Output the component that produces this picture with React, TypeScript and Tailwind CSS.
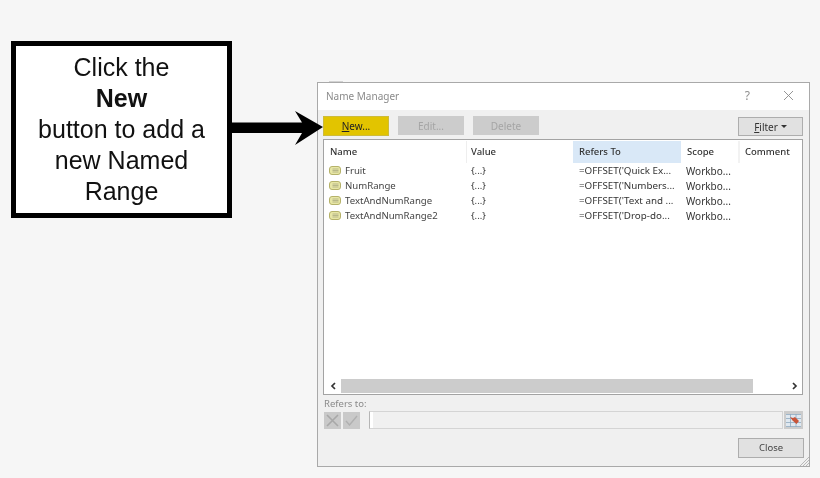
import React from "react";

const rows = [
  { name: "Fruit", refers: "=OFFSET('Quick Ex..." },
  { name: "NumRange", refers: "=OFFSET('Numbers..." },
  { name: "TextAndNumRange", refers: "=OFFSET('Text and ..." },
  { name: "TextAndNumRange2", refers: "=OFFSET('Drop-do..." },
];

const NameIcon = () => (
  <svg width="12" height="9" viewBox="0 0 12 9" className="shrink-0">
    <rect x="0.5" y="0.5" width="11" height="8" rx="2.500" fill="#e8e7a6" stroke="#b5b26a" />
    <path d="M3.500 3h6M3.500 4.500h6M3.500 6h6" stroke="#a3a37c" strokeWidth="0.7" />
  </svg>
);

const PickerIcon = () => (
  <svg width="15" height="13" viewBox="0 0 15 13">
    <rect width="15" height="13" fill="#dfe8f0" />
    <path d="M0 .5h15M0 4.500h15M0 8.500h15M0 12.500h15M4.500 0v13M10 0v13" stroke="#8ea8bf" strokeWidth="0.8" />
    <path d="M4 3l3 1 2-1 4 4-2.500 3-4-3.500z" fill="#c8553a" />
  </svg>
);

const App: React.FC = () => {
  return (
    <div className="w-[820px] h-[478px] bg-[#f6f6f6] overflow-hidden flex items-start relative font-['Noto_Sans',sans-serif]">
      {/* callout */}
      <div className="mt-[41px] ml-[11px] w-[221px] h-[177px] border-[5px] border-black bg-white flex flex-col items-center justify-center text-[25px] leading-[31px] text-[#111] font-['Liberation_Sans',sans-serif] blur-[0.3px]">
        <div>Click the</div>
        <div className="font-bold">New</div>
        <div>button to add a</div>
        <div>new Named</div>
        <div>Range</div>
      </div>

      {/* dialog */}
      <div className="mt-[82px] ml-[85px] w-[493px] h-[385px] border border-[#a9a9a9] bg-[#f0f0f0] flex flex-col relative text-[9.500px] leading-[14px] text-[#333] blur-[0.35px]">
        <div className="absolute -top-[2px] left-[11px] w-[14px] h-px bg-[#d2d2d2]" />

        <div className="h-[27px] bg-white flex items-center pl-[8px] pr-[15px] shrink-0">
          <span className="text-[#8a8a8a] text-[10px] -mt-[2px]">Name Manager</span>
          <span className="ml-auto text-[#8f8f8f] text-[12px] -mt-[2px]">?</span>
          <svg width="11" height="11" viewBox="0 0 11 11" className="ml-[33px] -mt-[2px]">
            <path d="M1 1l9 9M10 1l-9 9" stroke="#8a8a8a" strokeWidth="0.9" />
          </svg>
        </div>

        <div className="flex pl-[5px] pr-[6px] pt-[6px] h-[29px] shrink-0 items-start">
          <div className="w-[66px] h-[20px] bg-[#e2c400] border border-[#cdbb3a] flex items-center justify-center text-[#222] text-[10px]">
            <span><u>N</u>ew...</span>
          </div>
          <div className="ml-[9px] w-[66px] h-[19px] bg-[#cccccc] flex items-center justify-center text-[#a5a5a5] text-[10px]">Edit...</div>
          <div className="ml-[9px] w-[66px] h-[19px] bg-[#cccccc] flex items-center justify-center text-[#a5a5a5] text-[10px]">Delete</div>
          <div className="ml-auto mt-px w-[65px] h-[19px] bg-[#e1e1e1] border border-[#adadad] flex items-center justify-center gap-[3px] text-[#333] text-[10px]">
            <span><u>F</u>ilter</span>
            <svg width="6" height="3" viewBox="0 0 6 3"><path d="M0 0h6L3 3z" fill="#333" /></svg>
          </div>
        </div>

        <div className="ml-[5px] mr-[6px] h-[256px] shrink-0 border border-[#a3a3a3] bg-white flex flex-col">
          <div className="flex h-[22px] mt-px shrink-0 items-center font-medium">
            <div className="w-[143px] pl-[6px] h-full flex items-center border-r border-[#eeeeee] -mt-px">Name</div>
            <div className="w-[106px] pl-[4px] -mt-px">Value</div>
            <div className="w-[108px] pl-[6px] h-full flex items-center bg-[#d9e8f7]">Refers To</div>
            <div className="w-[59px] pl-[6px] h-full flex items-center border-r-2 border-[#f2f2f2]">Scope</div>
            <div className="pl-[5px]">Comment</div>
          </div>
          <div className="flex-1">
            {rows.map((r) => (
              <div key={r.name} className="flex h-[15px] items-center">
                <div className="w-[143px] pl-[5px] flex items-center gap-[4px]">
                  <NameIcon />
                  <span className="text-[#444] text-[9.600px]">{r.name}</span>
                </div>
                <div className="w-[106px] pl-[4px]">{"{...}"}</div>
                <div className="w-[107px] pl-[6px] whitespace-nowrap text-[9.800px]">{r.refers}</div>
                <div className="pl-[6px] text-[10px]">Workbo...</div>
              </div>
            ))}
          </div>
          <div className="h-[14px] mb-[1px] flex items-center shrink-0 text-[#333]">
            <div className="w-[17px] flex justify-center">
              <svg width="6" height="8" viewBox="0 0 6 8"><path d="M5 1L2 4l3 3" fill="none" stroke="#333" strokeWidth="1.700" /></svg>
            </div>
            <div className="w-[412px] h-full bg-[#cccccc]" />
            <div className="flex-1 flex justify-end pr-[4px]">
              <svg width="6" height="8" viewBox="0 0 6 8"><path d="M1 1l3 3-3 3" fill="none" stroke="#333" strokeWidth="1.700" /></svg>
            </div>
          </div>
        </div>

        <div className="ml-[6px] mt-[2px] h-[14px] text-[#8a8a8a] shrink-0">Refers to:</div>
        <div className="flex items-center pl-[6px] pr-[6px] h-[18px] shrink-0">
          <div className="w-[17px] h-[17px] bg-[#c9c9c9] flex items-center justify-center">
            <svg width="13" height="13" viewBox="0 0 13 13"><path d="M1 1l11 11M12 1L1 12" stroke="#a8a8a8" strokeWidth="1.600" /></svg>
          </div>
          <div className="ml-[2px] w-[17px] h-[17px] bg-[#c9c9c9] flex items-center justify-center">
            <svg width="13" height="11" viewBox="0 0 13 11"><path d="M1 6l3.500 4L12 1" fill="none" stroke="#b0b0b0" strokeWidth="1.400" /></svg>
          </div>
          <div className="ml-[9px] w-[414px] h-[18px] border border-[#d4d4d4] border-l-[#b5b5b5] bg-[#f0f0f0]">
            <div className="h-full w-[3px] bg-white" />
          </div>
          <div className="ml-px w-[19px] h-[18px] bg-[#cccccc] flex items-center justify-center">
            <PickerIcon />
          </div>
        </div>

        <div className="flex justify-end pr-[5px] mt-[9px] shrink-0">
          <div className="w-[66px] h-[20px] bg-[#e1e1e1] border border-[#adadad] flex items-center justify-center text-[#444]">Close</div>
        </div>

        {/* resize grip */}
        <svg width="9" height="9" viewBox="0 0 9 9" className="absolute right-0 bottom-0">
          <path d="M9 0L0 9M9 3L3 9M9 6L6 9" stroke="#a9a9a9" strokeWidth="0.8" />
        </svg>
      </div>

      {/* arrow */}
      <svg width="96" height="38" viewBox="0 0 96 38" className="absolute left-[231px] top-[109px] z-10 blur-[0.5px]">
        <path d="M0 13.500h71L64 2 92 18 64 36 71 24H0z" fill="#000" />
      </svg>
    </div>
  );
};

export default App;
